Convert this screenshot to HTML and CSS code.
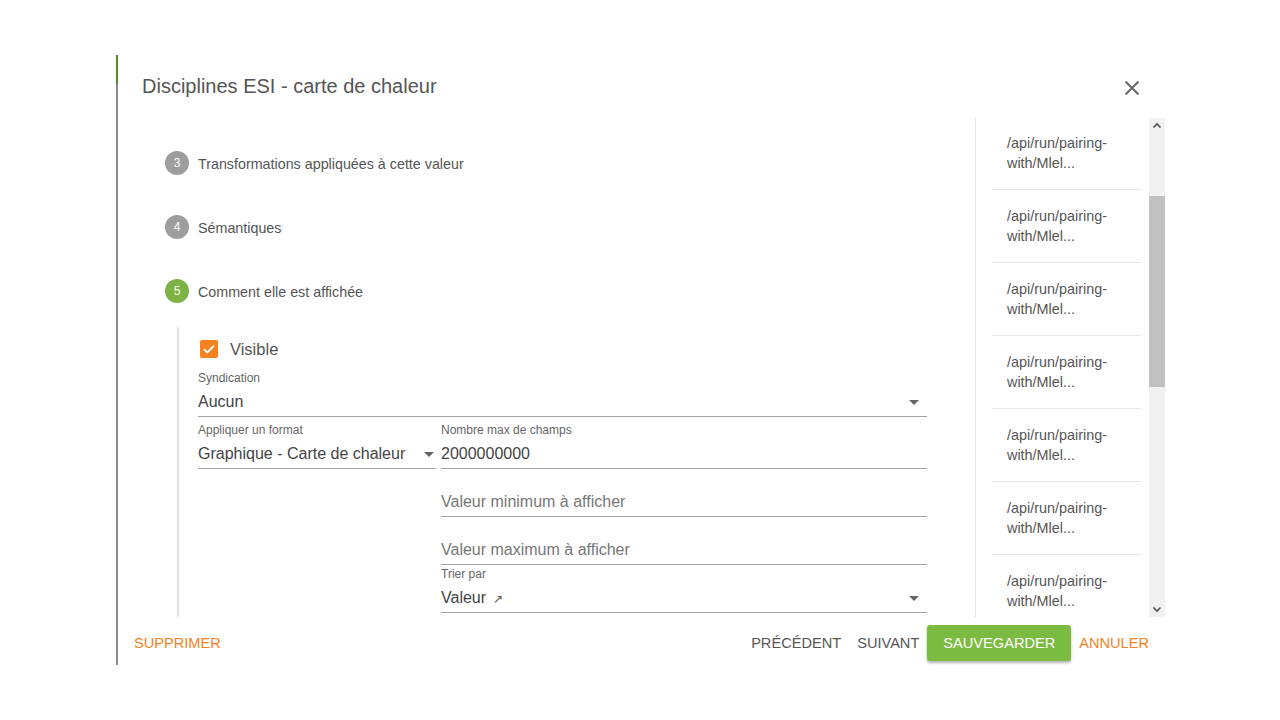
FILE: index.html
```html
<!DOCTYPE html>
<html lang="fr">
<head>
<meta charset="utf-8">
<title>Disciplines ESI - carte de chaleur</title>
<link rel="stylesheet" href="styles.css">
</head>
<body>
<div class="dialog">
  <header class="dlg-header">
    <h2 class="dlg-title">Disciplines ESI - carte de chaleur</h2>
    <button class="close" aria-label="Fermer">
      <svg width="24" height="24" viewBox="0 0 24 24"><path d="M5.5 5.5 L18.5 18.5 M18.5 5.5 L5.5 18.5" stroke="#666" stroke-width="2" fill="none"/></svg>
    </button>
  </header>
  <div class="dlg-body">
    <div class="stepper">
      <div class="step"><span class="step-num">3</span><span class="step-label">Transformations appliquées à cette valeur</span></div>
      <div class="step"><span class="step-num">4</span><span class="step-label">Sémantiques</span></div>
      <div class="step step-active"><span class="step-num">5</span><span class="step-label">Comment elle est affichée</span></div>
      <div class="step-content">
        <div class="check-row">
          <span class="checkbox"><svg width="18" height="18" viewBox="0 0 18 18"><path d="M4 9.2 L7.4 12.4 L14 5.6" stroke="#fff" stroke-width="2" fill="none"/></svg></span>
          <span class="check-label">Visible</span>
        </div>
        <div class="form-grid">
          <div class="field span2 f-syn">
            <div class="label">Syndication</div>
            <div class="value"><span>Aucun</span><span class="caret"></span></div>
          </div>
          <div class="field f-format">
            <div class="label">Appliquer un format</div>
            <div class="value"><span>Graphique - Carte de chaleur</span><span class="caret"></span></div>
          </div>
          <div class="field f-max">
            <div class="label">Nombre max de champs</div>
            <div class="value"><span>2000000000</span></div>
          </div>
          <div class="field col2">
            <div class="label"></div>
            <div class="value placeholder"><span>Valeur minimum à afficher</span></div>
          </div>
          <div class="field col2">
            <div class="label"></div>
            <div class="value placeholder"><span>Valeur maximum à afficher</span></div>
          </div>
          <div class="field col2 f-sort">
            <div class="label">Trier par</div>
            <div class="value"><span>Valeur <span class="sort-arrow">↗</span></span><span class="caret"></span></div>
          </div>
        </div>
      </div>
    </div>
    <aside class="side">
      <ul class="side-list">
        <li class="side-item">/api/run/pairing-<br>with/Mlel...</li>
        <li class="side-item">/api/run/pairing-<br>with/Mlel...</li>
        <li class="side-item">/api/run/pairing-<br>with/Mlel...</li>
        <li class="side-item">/api/run/pairing-<br>with/Mlel...</li>
        <li class="side-item">/api/run/pairing-<br>with/Mlel...</li>
        <li class="side-item">/api/run/pairing-<br>with/Mlel...</li>
        <li class="side-item">/api/run/pairing-<br>with/Mlel...</li>
        <li class="side-item">/api/run/pairing-<br>with/Mlel...</li>
      </ul>
      <div class="scrollbar">
        <div class="sb-btn"><svg width="16" height="16" viewBox="0 0 16 16"><path d="M4.5 9.5 L8 6 L11.5 9.5" stroke="#505050" stroke-width="1.6" fill="none"/></svg></div>
        <div class="sb-track"><div class="sb-thumb"></div></div>
        <div class="sb-btn"><svg width="16" height="16" viewBox="0 0 16 16"><path d="M4.5 6.5 L8 10 L11.5 6.5" stroke="#505050" stroke-width="1.6" fill="none"/></svg></div>
      </div>
    </aside>
  </div>
  <footer class="dlg-footer">
    <button class="btn btn-warn">Supprimer</button>
    <div class="footer-right">
      <button class="btn">Précédent</button>
      <button class="btn">Suivant</button>
      <button class="btn btn-primary">Sauvegarder</button>
      <button class="btn btn-warn">Annuler</button>
    </div>
  </footer>
</div>
</body>
</html>
```

FILE: styles.css
```css
* { box-sizing: border-box; }
html, body { margin: 0; padding: 0; background: #fff; }
body {
  font-family: "Liberation Sans", Arial, sans-serif;
  color: #444;
  width: 1280px;
  height: 720px;
  overflow: hidden;
}

.dialog {
  margin: 55px 0 0 116px;
  width: 1049px;
  height: 610px;
  border-left: 2px solid #888;
  border-image: linear-gradient(to bottom, #55892c 0, #55892c 30px, #8a8a8a 30px, #8a8a8a 100%) 1;
  display: flex;
  flex-direction: column;
}

.dlg-header {
  height: 63px;
  display: flex;
  align-items: center;
  justify-content: space-between;
  padding: 0 21px 0 24px;
  flex: none;
}
.dlg-title {
  margin: 0;
  font-weight: 400;
  font-size: 20px;
  color: #555;
}
.close {
  width: 24px;
  height: 24px;
  padding: 0;
  border: 0;
  background: none;
  display: flex;
  position: relative;
  top: 1px;
}

.dlg-body {
  height: 499px;
  display: flex;
  flex: none;
}

.stepper {
  flex: 1;
  padding: 33px 0 0 24px;
  overflow: hidden;
}
.step {
  display: flex;
  align-items: center;
  height: 24px;
  margin: 0 0 40px 23px;
  gap: 9px;
}
.step-num {
  width: 24px;
  height: 24px;
  border-radius: 50%;
  background: #9e9e9e;
  color: #fff;
  font-size: 12px;
  display: flex;
  align-items: center;
  justify-content: center;
}
.step-active .step-num { background: #7cb342; }
.step-label {
  font-size: 14.3px;
  color: #555;
  position: relative;
  top: 1px;
}
.step-active { margin-bottom: 24px; }

.step-content {
  margin-left: 35px;
  border-left: 2px solid #e2e2e2;
  padding: 10px 0 0 19px;
  min-height: 400px;
}

.check-row {
  display: flex;
  align-items: center;
  height: 24px;
  gap: 12px;
  padding-left: 2px;
}
.checkbox {
  width: 18px;
  height: 18px;
  border-radius: 2px;
  background: #f5821f;
  display: flex;
}
.check-label {
  font-size: 16.5px;
  color: #555;
}

.form-grid {
  display: grid;
  grid-template-columns: 238px 486px;
  column-gap: 5px;
  width: 729px;
  margin-top: 8px;
}
.field {
  padding-bottom: 2px;
  border-bottom: 1px solid #a3a3a3;
}
.span2 { grid-column: 1 / span 2; }
.col2 { grid-column: 2; }
.f-format, .f-max { margin-top: 4px; }

.label {
  font-size: 12px;
  line-height: 16px;
  height: 17px;
  padding-top: 1px;
  color: #666;
}
.value {
  margin-top: 4px;
  height: 24px;
  line-height: 24px;
  font-size: 16px;
  color: #444;
  display: flex;
  align-items: center;
  justify-content: space-between;
  white-space: nowrap;
}
.placeholder { color: #777; }
.sort-arrow { font-size: 12px; color: #555; margin-left: 2px; }

.caret {
  width: 0;
  height: 0;
  border-left: 5px solid transparent;
  border-right: 5px solid transparent;
  border-top: 5px solid #666;
}
.f-syn .value, .f-sort .value { padding-right: 8px; }
.f-format .value { padding-right: 2px; }

.side {
  width: 190px;
  border-left: 1px solid #e3e3e3;
  display: flex;
  flex: none;
}
.side-list {
  list-style: none;
  margin: -1px 0 0;
  padding: 0;
  flex: 1;
  overflow: hidden;
}
.side-item {
  margin: 0 8px 0 16px;
  padding: 16px 0 16px 15px;
  font-size: 14.4px;
  line-height: 20px;
  color: #555;
  border-bottom: 1px solid #e6e6e6;
}

.scrollbar {
  width: 16px;
  background: #f1f1f1;
  display: flex;
  flex-direction: column;
  flex: none;
}
.sb-btn { height: 16px; flex: none; display: flex; }
.sb-track { flex: 1; padding-top: 62px; }
.sb-thumb { height: 191px; background: #c1c1c1; }

.dlg-footer {
  height: 48px;
  display: flex;
  align-items: center;
  justify-content: space-between;
  padding: 4px 8px 0;
  flex: none;
}
.footer-right { display: flex; align-items: center; }
.btn {
  font-family: "Liberation Sans", Arial, sans-serif;
  font-size: 14.6px;
  text-transform: uppercase;
  background: none;
  border: 0;
  height: 36px;
  padding: 0 8px;
  color: #555;
  cursor: pointer;
}
.btn-warn { color: #f5821f; }
.btn-primary {
  background: #7cbb42;
  color: #fff;
  padding: 0 16px;
  border-radius: 3px;
  box-shadow: 0 2px 3px rgba(0,0,0,0.3);
}
```
